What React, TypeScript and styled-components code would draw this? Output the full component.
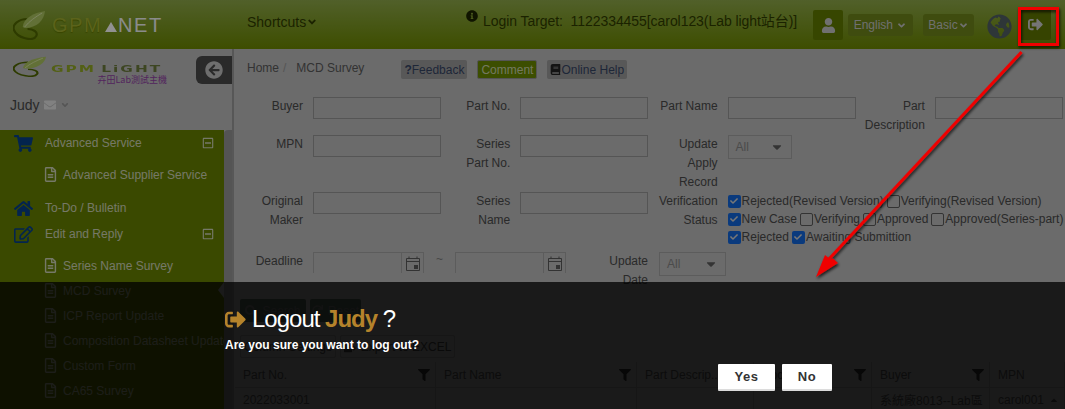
import React from 'react';
import styled, { createGlobalStyle } from 'styled-components';
import {
  FaAngleDown,
  FaArrowCircleLeft,
  FaBook,
  FaCaretDown,
  FaCaretUp,
  FaCheck,
  FaEnvelope,
  FaFileExport,
  FaFilter,
  FaGlobeAmericas,
  FaHome,
  FaInfoCircle,
  FaRedo,
  FaRegEdit,
  FaRegFileAlt,
  FaRegMinusSquare,
  FaSearch,
  FaShoppingCart,
  FaSignOutAlt,
  FaUser,
} from 'react-icons/fa';

const GlobalStyle = createGlobalStyle`
  html, body {
    margin: 0;
    padding: 0;
    background: #000;
  }
  body {
    font-family: "Liberation Sans", "Noto Sans CJK TC", sans-serif;
    font-size: 12px;
  }
`;

const Screen = styled.div`
  position: relative;
  width: 1065px;
  height: 409px;
  overflow: hidden;
  display: flex;
  flex-direction: column;
  background: #b2b2b2;
`;

/* top bar */
const Header = styled.header`
  flex: 0 0 49px;
  display: flex;
  align-items: center;
  background: linear-gradient(to bottom, #87a046, #678200);
  color: #2e3a00;
  font-size: 14px;
`;

const BrandLogo = styled.div`
  width: 247px;
  padding: 1px 0 0 13px;
  box-sizing: border-box;
  display: flex;
  align-items: center;
  font-size: 20px;
  line-height: 20px;
`;

const BrandGpm = styled.span`
  margin-left: 6px;
  letter-spacing: 1.5px;
  color: #98a52e;
  text-shadow: 0 1px 1px #5f7400;
`;

const BrandMark = styled.span`
  width: 0;
  height: 0;
  margin: 4px 1px 0 3px;
  border-left: 6px solid transparent;
  border-right: 6px solid transparent;
  border-bottom: 10px solid #f2f2f2;
`;

const BrandNet = styled.span`
  letter-spacing: 1.6px;
  color: #e6e8e8;
`;

const Shortcuts = styled.div`
  width: 219px;
  margin-top: -5px;
  display: flex;
  align-items: center;
`;

const LoginTarget = styled.div`
  display: flex;
  align-items: center;
  gap: 5px;
  margin-top: -10px;
  white-space: pre;
  width: 347px;
  letter-spacing: -0.06px;
`;

const InfoIcon = styled(FaInfoCircle)`
  margin-bottom: 8px;
  color: #1c2400;
`;

const HeadTools = styled.div`
  display: flex;
  align-items: center;
  height: 49px;
`;

const UserButton = styled.div`
  width: 30px;
  height: 30px;
  margin: 1px 5px 0 0;
  display: flex;
  align-items: center;
  justify-content: center;
  background: #5d7500;
  border-radius: 2px;
  color: #bbbbbb;
  font-size: 15px;
`;

const HeadMenu = styled.div<{ $width: number }>`
  width: ${(p) => p.$width}px;
  height: 22px;
  margin: 1px 10px 0 0;
  display: flex;
  align-items: center;
  justify-content: center;
  background: #6a7f1a;
  border-radius: 3px;
  color: #bbbbbb;
  font-size: 12px;
`;

const GlobeSlot = styled.div`
  width: 33px;
  margin: 3px 0 0 3px;
  display: flex;
  color: #4d5a5e;
  font-size: 25px;
`;

const LogoutButton = styled.div`
  width: 31px;
  height: 31px;
  display: flex;
  align-items: center;
  justify-content: center;
  background: #5a7000;
  border-radius: 2px;
  color: #c4c4c4;
  font-size: 15px;
`;

/* left menu */
const Body = styled.div`
  flex: 1;
  display: flex;
  min-height: 0;
`;

const Sidebar = styled.aside`
  flex: 0 0 232px;
  display: flex;
  flex-direction: column;
  border-right: 2px solid #929292;
`;

const SideTop = styled.div`
  flex: 0 0 81px;
  position: relative;
  color: #464646;
`;

const SideLogo = styled.div`
  display: flex;
  height: 27px;
  padding: 7px 0 0 13px;
`;

const SideLogoText = styled.div`
  width: 116px;
  margin: 9px 0 0 4px;
`;

const SideLogoWord = styled.div`
  transform: scaleX(1.7);
  transform-origin: left center;
  font-family: "DejaVu Sans", sans-serif;
  font-weight: 700;
  font-size: 9px;
  line-height: 9px;
  letter-spacing: 1.2px;
  white-space: nowrap;
  color: #8ba123;
`;

const SideLogoDark = styled.span`
  margin-left: 3px;
  color: #66753a;
`;

const SideLogoSub = styled.div`
  margin-top: 1px;
  text-align: right;
  font-family: "Noto Sans CJK TC", sans-serif;
  font-size: 9px;
  line-height: 9px;
  color: #8a3d9c;
`;

const CollapseButton = styled.div`
  position: absolute;
  top: 7px;
  right: 0;
  width: 36px;
  height: 28px;
  display: flex;
  align-items: center;
  justify-content: center;
  background: #464646;
  border-radius: 6px 0 0 6px;
  color: #b8b8b8;
  font-size: 18px;
`;

const SideUser = styled.div`
  display: flex;
  align-items: center;
  gap: 4px;
  margin: 14px 0 0 10px;
  font-size: 14px;
`;

const EnvelopeIcon = styled(FaEnvelope)`
  color: #d8d8d8;
`;

const AngleIcon = styled(FaAngleDown)`
  color: #8e8e8e;
`;

const MenuWrap = styled.div`
  flex: 1;
  display: flex;
  min-height: 0;
`;

const Menu = styled.nav`
  flex: 0 0 224px;
  width: 224px;
  overflow: hidden;
  background: #627b00;
  color: #c4c9ae;
`;

const MenuTrack = styled.div`
  flex: 1;
  background: #8d8d8d;
  border-radius: 4px 0 0 0;
`;

const GroupItem = styled.div`
  height: 26px;
  display: flex;
  align-items: center;
  padding: 0 10px 0 14px;
`;

const GroupIcon = styled.span`
  flex: 0 0 31px;
  display: flex;
  color: #063d82;
  font-size: 19px;
`;

const GroupToggle = styled.span`
  margin-left: auto;
  display: flex;
  font-size: 12px;
`;

const SubList = styled.div`
  padding: 6px 0 8px;
`;

const SubItem = styled.div`
  position: relative;
  height: 25px;
  display: flex;
  align-items: center;
  gap: 5px;
  padding-left: 43px;
  white-space: nowrap;
`;

const DocIcon = styled(FaRegFileAlt)`
  flex: none;
  font-size: 15px;
`;

const SubNotch = styled.b`
  position: absolute;
  right: 0;
  top: 4px;
  width: 0;
  height: 0;
  border-top: 8px solid transparent;
  border-bottom: 8px solid transparent;
  border-right: 6px solid #b2b2b2;
`;

/* content */
const Content = styled.main`
  flex: 1;
  min-width: 0;
  color: #464646;
`;

const TopLine = styled.div`
  display: flex;
  align-items: center;
  padding: 11px 0 0 13px;
`;

const Crumbs = styled.div`
  display: flex;
  margin-right: 37px;
  margin-top: -3px;
  color: #555555;
`;

const CrumbSep = styled.span`
  margin: 0 10px 0 4px;
  color: #8e8e8e;
`;

const TopButton = styled.div<{ $primary?: boolean }>`
  height: 19px;
  display: flex;
  align-items: center;
  padding: 0 3px;
  margin-right: 10px;
  border-radius: 2px;
  white-space: nowrap;
  background: ${(p) => (p.$primary ? '#658200' : '#939393')};
  border: ${(p) => (p.$primary ? '1px solid #8e8e8e' : 'none')};
  box-sizing: border-box;
  color: ${(p) => (p.$primary ? '#c0c9a0' : '#33425e')};
`;

const FormRow = styled.div<{ $height: number }>`
  display: grid;
  grid-template-columns: repeat(4, 207.3px);
  height: ${(p) => p.$height}px;
`;

const FirstRow = styled(FormRow)`
  margin-top: 18px;
`;

const Field = styled.div<{ $span?: number }>`
  display: grid;
  grid-template-columns: 69px 1fr;
  column-gap: 10px;
  align-items: start;
  grid-column: span ${(p) => p.$span || 1};
`;

const Label = styled.div`
  text-align: right;
  line-height: 19px;
`;

const TextBox = styled.div`
  width: 128px;
  height: 22px;
  box-sizing: border-box;
  border: 1px solid #8e8e8e;
`;

const SelectBox = styled.div<{ $width: number }>`
  width: ${(p) => p.$width}px;
  height: 24px;
  box-sizing: border-box;
  display: flex;
  align-items: center;
  justify-content: space-between;
  padding: 0 7px;
  border: 1px solid #999999;
  color: #7d7d7d;
`;

const CaretIcon = styled(FaCaretDown)`
  color: #575757;
  font-size: 14px;
`;

const CheckGroup = styled.div`
  display: flex;
  flex-direction: column;
  line-height: 18px;
  white-space: nowrap;
`;

const CheckLine = styled.div`
  display: flex;
  align-items: center;
  height: 18px;
`;

const CheckBox = styled.span<{ $checked?: boolean }>`
  flex: 0 0 13px;
  height: 13px;
  box-sizing: border-box;
  display: flex;
  align-items: center;
  justify-content: center;
  margin-right: 1px;
  border-radius: 2px;
  border: ${(p) => (p.$checked ? 'none' : '1px solid #555555')};
  background: ${(p) => (p.$checked ? '#1261d0' : 'transparent')};
  color: #c6c6c6;
  font-size: 8px;
`;

const CheckText = styled.span`
  margin-right: 3px;
`;

const DateRow = styled.div`
  display: flex;
  align-items: flex-start;
  height: 47px;
`;

const DateLabel = styled(Label)<{ $width: number; $gap: number }>`
  flex: 0 0 ${(p) => p.$width}px;
  margin-right: ${(p) => p.$gap}px;
`;

const DateBox = styled.div`
  flex: 0 0 111px;
  height: 21px;
  box-sizing: border-box;
  display: flex;
  justify-content: flex-end;
  border: 1px solid #999999;
  border-bottom: none;
`;

const DateButton = styled.div`
  flex: 0 0 21px;
  display: flex;
  align-items: center;
  justify-content: center;
  border-left: 1px solid #999999;
`;

const Tilde = styled.div`
  flex: 0 0 31px;
  text-align: center;
  color: #777777;
`;

const ActionRow = styled.div<{ $gap: number }>`
  display: flex;
  gap: 4px;
  padding-left: 6px;
  margin-bottom: ${(p) => p.$gap}px;
`;

const ActionButton = styled.div<{ $width: number }>`
  width: ${(p) => p.$width}px;
  height: 23px;
  box-sizing: border-box;
  display: flex;
  align-items: center;
  justify-content: center;
  gap: 5px;
  border-radius: 2px;
  background: #55665a;
  color: #7f7f7f;
`;

const ToolButton = styled(ActionButton)`
  background: transparent;
  border: 1px solid #999999;
  color: #464646;
`;

const GridTable = styled.div`
  display: grid;
  grid-template-columns: 201px 201px 117px 118px 118px 75px;
  padding-left: 1px;
`;

const HeadCell = styled.div`
  height: 26px;
  box-sizing: border-box;
  display: flex;
  align-items: center;
  justify-content: space-between;
  padding: 0 5px 0 8px;
  border-right: 1px solid #999999;
  border-bottom: 1px solid #999999;
  white-space: nowrap;
  overflow: hidden;
  color: #555555;
`;

const BodyCell = styled(HeadCell)`
  height: 24px;
`;

const FilterIcon = styled(FaFilter)`
  flex: none;
  font-size: 12px;
  color: #333333;
`;

/* dimming and the logout message */
const Dim = styled.div`
  position: absolute;
  inset: 0;
  background: rgba(0, 0, 0, 0.4);
`;

const MessageBand = styled.div`
  position: absolute;
  left: 0;
  right: 0;
  top: 282px;
  bottom: 0;
  background: rgba(0, 0, 0, 0.757);
`;

const MessageBody = styled.div`
  width: 639px;
  box-sizing: border-box;
  margin-left: 213px;
  padding: 22px 20px 0 12px;
  color: #fff;
`;

const MessageTitle = styled.div`
  display: flex;
  align-items: center;
  gap: 6px;
  font-size: 24px;
  line-height: 30px;
  letter-spacing: -1px;
  white-space: pre;
`;

const TitleIcon = styled(FaSignOutAlt)`
  color: #b5832b;
  font-size: 21px;
`;

const UserName = styled.span`
  color: #b5832b;
  font-weight: 700;
`;

const MessageText = styled.p`
  margin: 2px 0 0;
  font-size: 12px;
  line-height: 18px;
  font-weight: 700;
`;

const MessageButtons = styled.div`
  display: flex;
  justify-content: flex-end;
  gap: 7px;
  margin-top: 10px;
`;

const MessageButton = styled.button<{ $width: number }>`
  width: ${(p) => p.$width}px;
  height: 27px;
  padding: 0;
  border: none;
  border-bottom: 2px solid #dcdcdc;
  border-radius: 1px;
  background: #fff;
  color: #333;
  font-family: "Liberation Sans", sans-serif;
  font-size: 13px;
  font-weight: 700;
  letter-spacing: 0.6px;
`;

const Callout = styled.svg`
  position: absolute;
  inset: 0;
  width: 1065px;
  height: 409px;
  pointer-events: none;
`;

const LeafLogo = ({ width, height }: { width: number; height: number }) => (
  <svg width={width} height={height} viewBox="0 0 34 30" preserveAspectRatio="none">
    <path d="M15 9C5 9 -1 15 1 20C4 28 21 32 24 26C26 22 21 19 15 19" fill="none" stroke="#4d6300" strokeWidth="2.2" />
    <path d="M10 17C11 8 21 3 33 1C32 10 25 18 12 18Z" fill="#a3bb5c" />
    <path d="M12 17C17 11 23 7 30 3" fill="none" stroke="#cfdc9e" strokeWidth="1" />
  </svg>
);

const CalendarIcon = () => (
  <svg width="14" height="15" viewBox="0 0 14 15">
    <path d="M0.5 2.5H13.5V14.5H0.5ZM0.5 5.5H13.5" fill="none" stroke="#555" />
    <path d="M3 0.5V3M11 0.5V3" stroke="#555" />
    <rect x="8" y="9" width="4" height="4" fill="#555" />
  </svg>
);

const Check = ({ checked, label }: { checked?: boolean; label: string }) => (
  <>
    <CheckBox $checked={checked}>{checked && <FaCheck />}</CheckBox>
    <CheckText>{label}</CheckText>
  </>
);

const advancedItems = ['Advanced Supplier Service'];
const replyItems = [
  'Series Name Survey',
  'MCD Survey',
  'ICP Report Update',
  'Composition Datasheet Update',
  'Custom Form',
  'CA65 Survey',
];

const columns = ['Part No.', 'Part Name', 'Part Descrip..', 'Document', 'Buyer', 'MPN'];

const App: React.FC = () => {
  return (
    <Screen>
      <GlobalStyle />
      <Header>
        <BrandLogo>
          <LeafLogo width={33} height={30} />
          <BrandGpm>GPM</BrandGpm>
          <BrandMark />
          <BrandNet>NET</BrandNet>
        </BrandLogo>
        <Shortcuts>
          Shortcuts
          <FaAngleDown size={12} />
        </Shortcuts>
        <LoginTarget>
          <InfoIcon size={12} />
          {'Login Target:  1122334455[carol123(Lab light站台)]'}
        </LoginTarget>
        <HeadTools>
          <UserButton>
            <FaUser />
          </UserButton>
          <HeadMenu $width={65}>
            English&nbsp;
            <FaAngleDown size={11} />
          </HeadMenu>
          <HeadMenu $width={51}>
            Basic
            <FaAngleDown size={11} />
          </HeadMenu>
          <GlobeSlot>
            <FaGlobeAmericas />
          </GlobeSlot>
          <LogoutButton>
            <FaSignOutAlt />
          </LogoutButton>
        </HeadTools>
      </Header>

      <Body>
        <Sidebar>
          <SideTop>
            <SideLogo>
              <LeafLogo width={34} height={21} />
              <SideLogoText>
                <SideLogoWord>
                  GPM<SideLogoDark>LiGHT</SideLogoDark>
                </SideLogoWord>
                <SideLogoSub>卉田Lab測試主機</SideLogoSub>
              </SideLogoText>
            </SideLogo>
            <CollapseButton>
              <FaArrowCircleLeft />
            </CollapseButton>
            <SideUser>
              Judy
              <EnvelopeIcon size={12} />
              <AngleIcon size={10} />
            </SideUser>
          </SideTop>
          <MenuWrap>
            <Menu>
              <GroupItem>
                <GroupIcon>
                  <FaShoppingCart />
                </GroupIcon>
                Advanced Service
                <GroupToggle>
                  <FaRegMinusSquare />
                </GroupToggle>
              </GroupItem>
              <SubList>
                {advancedItems.map((item) => (
                  <SubItem key={item}>
                    <DocIcon />
                    {item}
                  </SubItem>
                ))}
              </SubList>
              <GroupItem>
                <GroupIcon>
                  <FaHome />
                </GroupIcon>
                To-Do / Bulletin
              </GroupItem>
              <GroupItem>
                <GroupIcon>
                  <FaRegEdit />
                </GroupIcon>
                Edit and Reply
                <GroupToggle>
                  <FaRegMinusSquare />
                </GroupToggle>
              </GroupItem>
              <SubList>
                {replyItems.map((item) => (
                  <SubItem key={item}>
                    <DocIcon />
                    {item}
                    {item === 'MCD Survey' && <SubNotch />}
                  </SubItem>
                ))}
              </SubList>
            </Menu>
            <MenuTrack />
          </MenuWrap>
        </Sidebar>

        <Content>
          <TopLine>
            <Crumbs>
              <span>Home</span>
              <CrumbSep>/</CrumbSep>
              <span>MCD Survey</span>
            </Crumbs>
            <TopButton>
              <b>?</b>Feedback
            </TopButton>
            <TopButton $primary>Comment</TopButton>
            <TopButton>
              <FaBook size={11} color="#222" />
              Online Help
            </TopButton>
          </TopLine>

          <FirstRow $height={38}>
            <Field>
              <Label>Buyer</Label>
              <TextBox />
            </Field>
            <Field>
              <Label>Part No.</Label>
              <TextBox />
            </Field>
            <Field>
              <Label>Part Name</Label>
              <TextBox />
            </Field>
            <Field>
              <Label>Part Description</Label>
              <TextBox />
            </Field>
          </FirstRow>

          <FormRow $height={57}>
            <Field>
              <Label>MPN</Label>
              <TextBox />
            </Field>
            <Field>
              <Label>
                Series
                <br />
                Part No.
              </Label>
              <TextBox />
            </Field>
            <Field>
              <Label>Update Apply Record</Label>
              <SelectBox $width={64}>
                All
                <CaretIcon />
              </SelectBox>
            </Field>
          </FormRow>

          <FormRow $height={60}>
            <Field>
              <Label>Original Maker</Label>
              <TextBox />
            </Field>
            <Field>
              <Label>Series Name</Label>
              <TextBox />
            </Field>
            <Field $span={2}>
              <Label>Verification Status</Label>
              <CheckGroup>
                <CheckLine>
                  <Check checked label="Rejected(Revised Version)" />
                  <Check label="Verifying(Revised Version)" />
                </CheckLine>
                <CheckLine>
                  <Check checked label="New Case" />
                  <Check label="Verifying" />
                  <Check label="Approved" />
                  <Check label="Approved(Series-part)" />
                </CheckLine>
                <CheckLine>
                  <Check checked label="Rejected" />
                  <Check checked label="Awaiting Submittion" />
                </CheckLine>
              </CheckGroup>
            </Field>
          </FormRow>

          <DateRow>
            <DateLabel $width={69} $gap={10}>
              Deadline
            </DateLabel>
            <DateBox>
              <DateButton>
                <CalendarIcon />
              </DateButton>
            </DateBox>
            <Tilde>~</Tilde>
            <DateBox>
              <DateButton>
                <CalendarIcon />
              </DateButton>
            </DateBox>
            <DateLabel $width={82} $gap={11}>
              Update
              <br />
              Date
            </DateLabel>
            <SelectBox $width={67}>
              All
              <CaretIcon />
            </SelectBox>
          </DateRow>

          <ActionRow $gap={13}>
            <ActionButton $width={66}>
              <FaSearch size={12} />
              Search
            </ActionButton>
            <ActionButton $width={51}>
              <FaRedo size={11} />
              Reset
            </ActionButton>
          </ActionRow>
          <ActionRow $gap={4}>
            <ToolButton $width={96}>Column Settings</ToolButton>
            <ToolButton $width={115}>
              <FaFileExport size={12} />
              Export to EXCEL
            </ToolButton>
          </ActionRow>

          <GridTable>
            {columns.map((col) => (
              <HeadCell key={col}>
                {col}
                {col !== 'MPN' && <FilterIcon />}
              </HeadCell>
            ))}
            <BodyCell>2022033001</BodyCell>
            <BodyCell />
            <BodyCell />
            <BodyCell />
            <BodyCell>系統廠8013--Lab區</BodyCell>
            <BodyCell>
              carol001
              <FaCaretUp size={10} />
            </BodyCell>
          </GridTable>
        </Content>
      </Body>

      <Dim />
      <MessageBand>
        <MessageBody>
          <MessageTitle>
            <TitleIcon />
            <span>
              Logout <UserName>Judy</UserName> ?
            </span>
          </MessageTitle>
          <MessageText>Are you sure you want to log out?</MessageText>
          <MessageButtons>
            <MessageButton $width={57}>Yes</MessageButton>
            <MessageButton $width={50}>No</MessageButton>
          </MessageButtons>
        </MessageBody>
      </MessageBand>

      <Callout viewBox="0 0 1065 409">
        <defs>
          <filter id="calloutShadow" x="-10%" y="-10%" width="120%" height="120%">
            <feDropShadow dx="1" dy="2" stdDeviation="1.5" floodColor="#000" floodOpacity="0.75" />
          </filter>
        </defs>
        <g filter="url(#calloutShadow)">
          <rect x="1019.5" y="8.5" width="38" height="36" fill="none" stroke="#f00000" strokeWidth="3" />
          <path d="M1021.5 52L829 259" stroke="#f00000" strokeWidth="3" fill="none" />
          <path d="M816 277L825 255L830 259L833 258.5L838 263Z" fill="#f00000" />
        </g>
      </Callout>
    </Screen>
  );
};

export default App;
